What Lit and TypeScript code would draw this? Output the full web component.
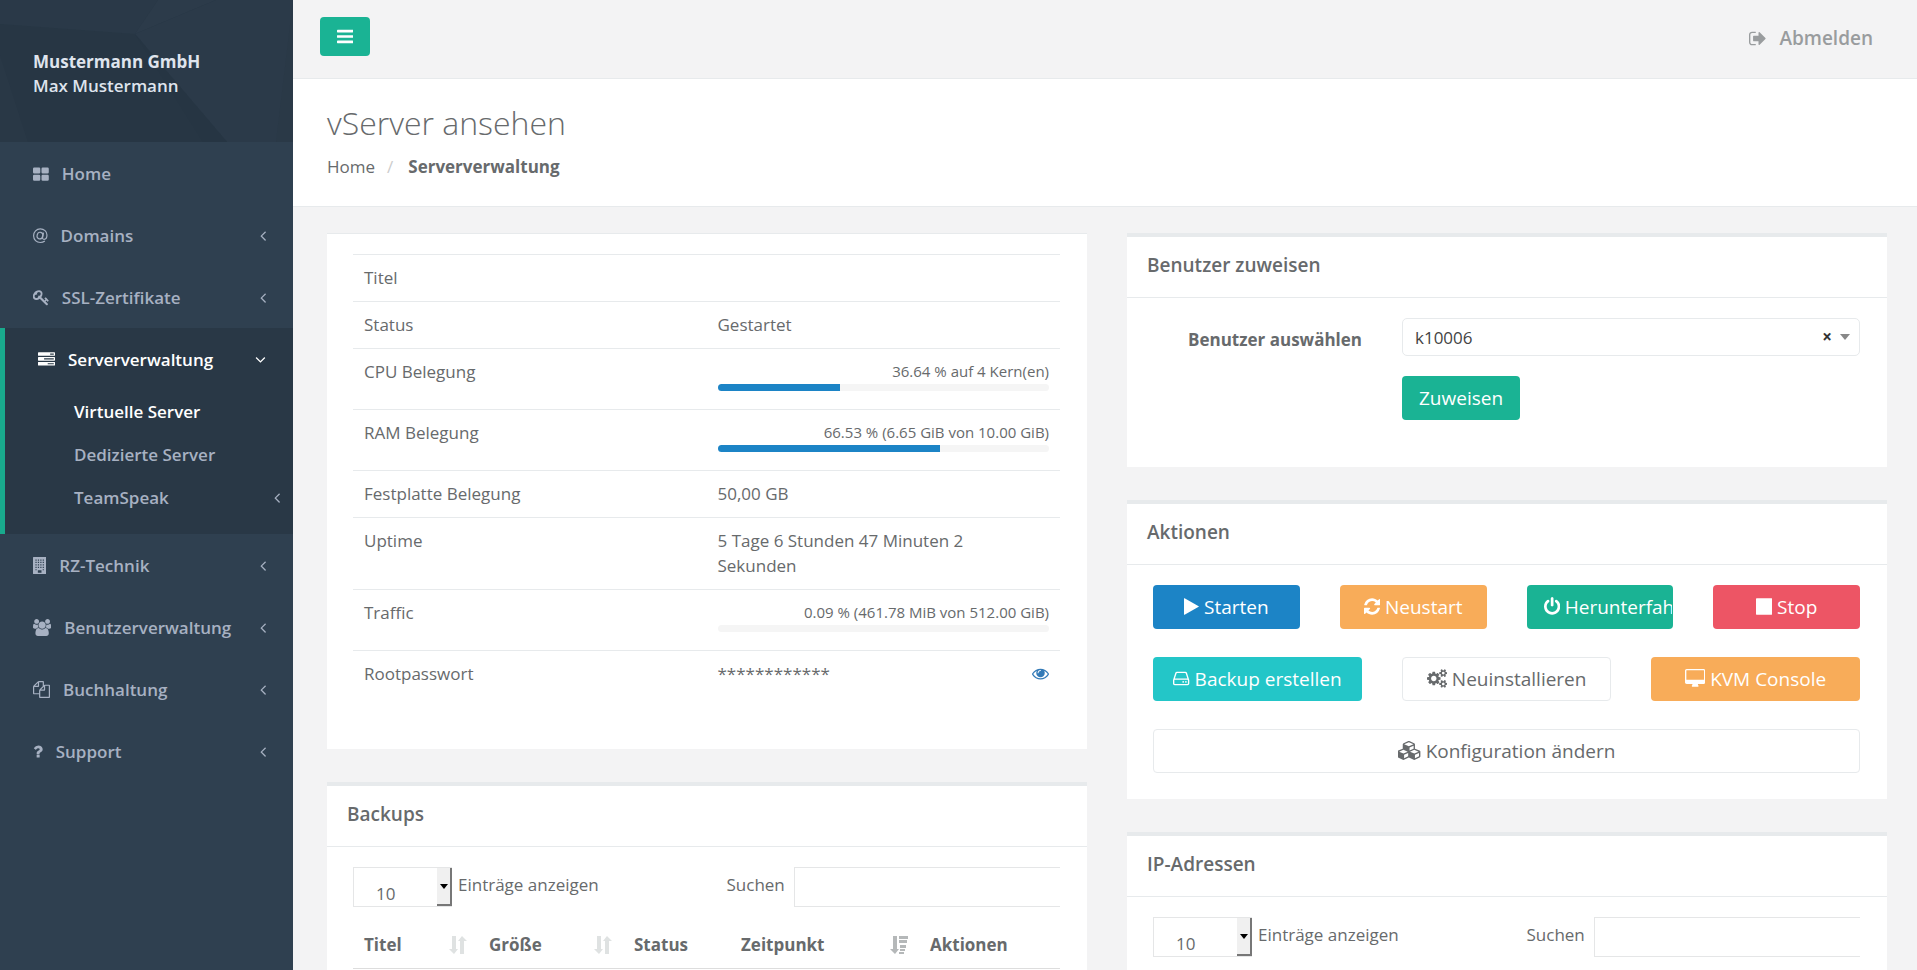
import { LitElement, html, css, svg, nothing } from "lit";
import { customElement, property, state } from "lit/decorators.js";
import { classMap } from "lit/directives/class-map.js";
import { styleMap } from "lit/directives/style-map.js";

/** Glyph outlines on a 1792-unit grid whose baseline lies at y = 1536: [min x, width, shape]. */
const GLYPHS: Record<string, [number, number, unknown]> = {
  bars: [128, 1536, svg`<path d="M1664 1344v128q0 26-19 45t-45 19h-1408q-26 0-45-19t-19-45v-128q0-26 19-45t45-19h1408q26 0 45 19t19 45zm0-512v128q0 26-19 45t-45 19h-1408q-26 0-45-19t-19-45v-128q0-26 19-45t45-19h1408q26 0 45 19t19 45zm0-512v128q0 26-19 45t-45 19h-1408q-26 0-45-19t-19-45v-128q0-26 19-45t45-19h1408q26 0 45 19t19 45z"/>`],
  grid: [0, 1664, svg`<path d="M128 256h512q128 0 128 128v384q0 128-128 128h-512q-128 0-128-128v-384q0-128 128-128zm896 0h512q128 0 128 128v384q0 128-128 128h-512q-128 0-128-128v-384q0-128 128-128zm-896 768h512q128 0 128 128v384q0 128-128 128h-512q-128 0-128-128v-384q0-128 128-128zm896 0h512q128 0 128 128v384q0 128-128 128h-512q-128 0-128-128v-384q0-128 128-128z"/>`],
  at: [0, 1536, svg`<g fill="none" stroke="currentColor" stroke-width="125"><path d="M1250 1480q-210 155-482 155c-400 0-705-310-705-715s305-715 705-715 705 270 705 640c0 290-160 450-310 450-130 0-170-80-150-190l95-520"/><ellipse cx="730" cy="905" rx="295" ry="350" transform="rotate(14 730 905)"/></g>`],
  key: [21, 1664, svg`<path d="M832 512q0-80-56-136t-136-56-136 56-56 136q0 42 19 83-41-19-83-19-80 0-136 56t-56 136 56 136 136 56 136-56 56-136q0-42-19-83 41 19 83 19 80 0 136-56t56-136zm851 704q0 17-49 66t-66 49q-9 0-28.500-16t-36.500-33-38.500-40-24.500-26l-96 96 220 220q28 28 28 68 0 42-39 81t-81 39q-40 0-68-28l-671-671q-176 131-365 131-163 0-265.500-102.500t-102.500-265.500q0-160 95-313t248-248 313-95q163 0 265.500 102.500t102.500 265.500q0 189-131 365l355 355 96-96q-3-3-26-24.500t-40-38.500-33-36.500-16-28.500q0-17 49-66t66-49q13 0 23 10 6 6 46 44.500t82 79.500 86.500 86 73 78 28.500 41z"/>`],
  tasks: [0, 1792, svg`<path d="M1024 1408h640v-128h-640v128zm-384-512h1024v-128h-1024v128zm640-512h384v-128h-384v128zm512 832v256q0 26-19 45t-45 19h-1664q-26 0-45-19t-19-45v-256q0-26 19-45t45-19h1664q26 0 45 19t19 45zm0-512v256q0 26-19 45t-45 19h-1664q-26 0-45-19t-19-45v-256q0-26 19-45t45-19h1664q26 0 45 19t19 45zm0-512v256q0 26-19 45t-45 19h-1664q-26 0-45-19t-19-45v-256q0-26 19-45t45-19h1664q26 0 45 19t19 45z"/>`],
  building: [0, 1408, svg`<path fill-rule="evenodd" d="M64 0h1280q64 0 64 64v1664q0 64-64 64h-1280q-64 0-64-64v-1664q0-64 64-64zM256 256v128h128v-128zM512 256v128h128v-128zM768 256v128h128v-128zM1024 256v128h128v-128zM256 512v128h128v-128zM512 512v128h128v-128zM768 512v128h128v-128zM1024 512v128h128v-128zM256 768v128h128v-128zM512 768v128h128v-128zM768 768v128h128v-128zM1024 768v128h128v-128zM256 1024v128h128v-128zM512 1024v128h128v-128zM768 1024v128h128v-128zM1024 1024v128h128v-128zM256 1280v128h128v-128zM1024 1280v128h128v-128zM512 1408v256h384v-256z"/>`],
  users: [0, 1920, svg`<path d="M593 896q-162 5-265 128h-134q-82 0-138-40.500t-56-118.500q0-353 124-353 6 0 43.500 21t97.500 42.500 119 21.500q67 0 133-23-5 37-5 66 0 139 81 256zm1071 637q0 120-73 189.500t-194 69.500h-874q-121 0-194-69.500t-73-189.500q0-53 3.500-103.500t14-109 26.500-108.500 43-97.500 62-81 85.500-53.500 111.500-20q10 0 43 21.500t73 48 107 48 135 21.500 135-21.500 107-48 73-48 43-21.500q61 0 111.500 20t85.500 53.500 62 81 43 97.500 26.500 108.500 14 109 3.500 103.500zm-1024-1277q0 106-75 181t-181 75-181-75-75-181 75-181 181-75 181 75 75 181zm704 384q0 159-112.500 271.500t-271.500 112.500-271.500-112.500-112.500-271.500 112.500-271.500 271.500-112.500 271.500 112.500 112.500 271.500zm576 225q0 78-56 118.500t-138 40.500h-134q-103-123-265-128 81-117 81-256 0-29-5-66 66 23 133 23 59 0 119-21.500t97.500-42.500 43.500-21q124 0 124 353zm-128-609q0 106-75 181t-181 75-181-75-75-181 75-181 181-75 181 75 75 181z"/>`],
  files: [0, 1792, svg`<path d="M1696 384q40 0 68 28t28 68v1216q0 40-28 68t-68 28h-960q-40 0-68-28t-28-68v-288h-544q-40 0-68-28t-28-68v-672q0-40 20-88t48-76l408-408q28-28 76-48t88-20h416q40 0 68 28t28 68v328q68-40 128-40h416zm-544 213l-299 299h299v-299zm-640-384l-299 299h299v-299zm196 647l316-316v-416h-384v416q0 40-28 68t-68 28h-416v640h512v-256q0-40 20-88t48-76zm956 804v-1152h-384v416q0 40-28 68t-68 28h-416v640h896z"/>`],
  question: [384, 1024, svg`<path d="M1088 1256v240q0 16-12 28t-28 12h-240q-16 0-28-12t-12-28v-240q0-16 12-28t28-12h240q16 0 28 12t12 28zm316-600q0 54-15.500 101t-35 76.500-55 59.500-57.500 43.500-61 35.500q-41 23-68.500 65t-27.500 67q0 17-12 32.500t-28 15.500h-240q-15 0-25.500-18.500t-10.500-37.500v-45q0-83 65-156.500t143-108.500q59-27 84-56t25-76q0-42-46.500-74t-107.500-32q-65 0-108 29-35 25-107 115-13 16-31 16-12 0-25-8l-164-125q-13-10-15.500-25t5.500-28q160-266 464-266 80 0 161 31t146 83 106 127.500 41 158.500z"/>`],
  left: [576, 640, svg`<path d="M1203 544q0 13-10 23l-393 393 393 393q10 10 10 23t-10 23l-50 50q-10 10-23 10t-23-10l-466-466q-10-10-10-23t10-23l466-466q10-10 23-10t23 10l50 50q10 10 10 23z"/>`],
  down: [320, 1152, svg`<path d="M1395 736q0 13-10 23l-466 466q-10 10-23 10t-23-10l-466-466q-10-10-10-23t10-23l50-50q10-10 23-10t23 10l393 393 393-393q10-10 23-10t23 10l50 50q10 10 10 23z"/>`],
  signout: [64, 1664, svg`<path d="M704 1440q0 4 1 20t.5 26.500-3 23.500-10 19.500-20.500 6.500h-320q-119 0-203.500-84.500t-84.500-203.500v-704q0-119 84.500-203.500t203.500-84.500h320q13 0 22.500 9.500t9.500 22.500q0 4 1 20t.5 26.500-3 23.500-10 19.500-20.500 6.500h-320q-66 0-113 47t-47 113v704q0 66 47 113t113 47h312l11.500 1 11.500 3 8 5.500 7 9 2 13.500zm928-544q0 26-19 45l-544 544q-19 19-45 19t-45-19-19-45v-288h-448q-26 0-45-19t-19-45v-384q0-26 19-45t45-19h448v-288q0-26 19-45t45-19 45 19l544 544q19 19 19 45z"/>`],
  play: [192, 1408, svg`<path d="M1576 927l-1328 738q-23 13-39.500 3t-16.500-36v-1472q0-26 16.500-36t39.500 3l1328 738q23 13 23 31t-23 31z"/>`],
  stop: [128, 1536, svg`<path d="M1664 192v1408q0 26-19 45t-45 19h-1408q-26 0-45-19t-19-45v-1408q0-26 19-45t45-19h1408q26 0 45 19t19 45z"/>`],
  refresh: [128, 1536, svg`<path d="M1639 1056q0 5-1 7-64 268-268 434.500t-478 166.500q-146 0-282.500-55t-243.500-157l-129 129q-19 19-45 19t-45-19-19-45v-448q0-26 19-45t45-19h448q26 0 45 19t19 45-19 45l-137 137q71 66 161 102t187 36q134 0 250-65t186-179q11-17 53-117 8-23 30-23h192q13 0 22.500 9.500t9.500 22.500zm25-800v448q0 26-19 45t-45 19h-448q-26 0-45-19t-19-45 19-45l138-138q-148-137-349-137-134 0-250 65t-186 179q-11 17-53 117-8 23-30 23h-199q-13 0-22.500-9.500t-9.500-22.500v-7q65-268 270-434.500t480-166.500q146 0 284 55.500t245 156.500l130-129q19-19 45-19t45 19 19 45z"/>`],
  power: [128, 1536, svg`<path d="M1664 896q0 156-61 298t-164 245-245 164-298 61-298-61-245-164-164-245-61-298q0-182 80.500-343t226.500-270q43-32 95.500-25t83.500 50q32 42 24.500 94.500t-49.500 84.500q-98 74-151.500 181t-53.500 228q0 104 40.500 198.500t109.500 163.500 163.500 109.500 198.500 40.500 198.500-40.500 163.500-109.500 109.500-163.500 40.500-198.500q0-121-53.500-228t-151.500-181q-42-32-49.500-84.500t24.500-94.500q31-43 84-50t95 25q146 109 226.500 270t80.500 343zm-640-768v640q0 52-38 90t-90 38-90-38-38-90v-640q0-52 38-90t90-38 90 38 38 90z"/>`],
  drive: [128, 1536, svg`<path d="M1168 1216q0 33-23.500 56.500t-56.500 23.500-56.500-23.500-23.500-56.500 23.500-56.500 56.500-23.500 56.500 23.500 23.500 56.500zm256 0q0 33-23.500 56.500t-56.500 23.500-56.500-23.500-23.500-56.500 23.500-56.500 56.500-23.500 56.500 23.500 23.500 56.500zm112 160v-320q0-13-9.500-22.500t-22.500-9.500h-1216q-13 0-22.500 9.500t-9.500 22.500v320q0 13 9.500 22.500t22.500 9.500h1216q13 0 22.500-9.500t9.500-22.500zm-1230-480h1180l-157-482q-4-13-16-21.500t-26-8.500h-782q-14 0-26 8.500t-16 21.500zm1358 160v320q0 66-47 113t-113 47h-1216q-66 0-113-47t-47-113v-320q0-25 16-75l197-606q17-53 63-86t101-33h782q55 0 101 33t63 86l197 606q16 50 16 75z"/>`],
  cogs: [-64, 1920, svg`<path d="M832 896q0-106-75-181t-181-75-181 75-75 181 75 181 181 75 181-75 75-181zm768 512q0-52-38-90t-90-38-90 38-38 90q0 53 37.500 90.500t90.500 37.500 90.500-37.500 37.500-90.500zm0-1024q0-52-38-90t-90-38-90 38-38 90q0 53 37.500 90.500t90.500 37.500 90.500-37.500 37.500-90.500zm-384 421v185q0 10-7 19.500t-16 10.500l-155 24q-11 35-32 76 34 48 90 115 7 11 7 20 0 12-7 19-23 30-82.500 89.500t-78.500 59.500q-11 0-21-7l-115-90q-37 19-77 31-11 108-23 155-7 24-30 24h-186q-11 0-20-7.500t-10-17.500l-23-153q-34-10-75-31l-118 89q-7 7-20 7-11 0-21-8-144-133-144-160 0-9 7-19 10-14 41-53t47-61q-23-44-35-82l-152-24q-10-1-17-9.500t-7-19.500v-185q0-10 7-19.500t16-10.500l155-24q11-35 32-76-34-48-90-115-7-11-7-20 0-12 7-20 22-30 82-89t79-59q11 0 21 7l115 90q34-18 77-32 11-108 23-154 7-24 30-24h186q11 0 20 7.500t10 17.500l23 153q34 10 75 31l118-89q8-7 20-7 11 0 21 8 144 133 144 160 0 8-7 19-12 16-42 54t-45 60q23 48 34 82l152 23q10 2 17 10.500t7 19.500zm640 533v140q0 16-149 31-12 27-30 52 51 113 51 138 0 4-4 7-122 71-124 71-8 0-46-47t-52-68q-20 2-30 2t-30-2q-14 21-52 68t-46 47q-2 0-124-71-4-3-4-7 0-25 51-138-18-25-30-52-149-15-149-31v-140q0-16 149-31 13-29 30-52-51-113-51-138 0-4 4-7 4-2 35-20t59-34 30-16q8 0 46 46.500t52 67.500q20-2 30-2t30 2q51-71 92-112l6-2q4 0 124 70 4 3 4 7 0 25-51 138 17 23 30 52 149 15 149 31zm0-1024v140q0 16-149 31-12 27-30 52 51 113 51 138 0 4-4 7-122 71-124 71-8 0-46-47t-52-68q-20 2-30 2t-30-2q-14 21-52 68t-46 47q-2 0-124-71-4-3-4-7 0-25 51-138-18-25-30-52-149-15-149-31v-140q0-16 149-31 13-29 30-52-51-113-51-138 0-4 4-7 4-2 35-20t59-34 30-16q8 0 46 46.500t52 67.500q20-2 30-2t30 2q51-71 92-112l6-2q4 0 124 70 4 3 4 7 0 25-51 138 17 23 30 52 149 15 149 31z"/>`],
  desktop: [-64, 1920, svg`<path d="M1728 992v-832q0-13-9.500-22.500t-22.500-9.500h-1600q-13 0-22.500 9.500t-9.500 22.500v832q0 13 9.500 22.500t22.500 9.500h1600q13 0 22.500-9.500t9.500-22.500zm128-832v1088q0 66-47 113t-113 47h-544q0 37 16 77.500t32 71 16 43.500q0 26-19 45t-45 19h-512q-26 0-45-19t-19-45q0-14 16-44t32-70 16-78h-544q-66 0-113-47t-47-113v-1088q0-66 47-113t113-47h1600q66 0 113 47t47 113z"/>`],
  cubes: [0, 2176, svg`<path fill-rule="evenodd" d="M576 1632l384-192v-314l-384 164v342zm-64-454l404-173-404-173-404 173zm1088 454l384-192v-314l-384 164v342zm-64-454l404-173-404-173-404 173zm-448-293l384-165v-266l-384 164v267zm-64-379l441-189-441-189-441 189zm1088 518v416q0 36-19 67t-52 47l-448 224q-25 14-57 14t-57-14l-448-224q-4-2-7-4-2 2-7 4l-448 224q-25 14-57 14t-57-14l-448-224q-33-16-52-47t-19-67v-416q0-38 21.500-70t56.500-48l434-186v-400q0-38 21.500-70t56.500-48l448-192q23-10 50-10t50 10l448 192q35 16 56.500 48t21.500 70v400l434 186q36 16 57 48t21 70z"/>`],
  eye: [0, 1792, svg`<path d="M1664 960q-152-236-381-353 61 104 61 225 0 185-131.500 316.500t-316.500 131.500-316.500-131.500-131.500-316.500q0-121 61-225-229 117-381 353 133 205 333.500 326.500t434.500 121.500 434.500-121.500 333.500-326.500zm-720-384q0-20-14-34t-34-14q-125 0-214.500 89.500t-89.500 214.500q0 20 14 34t34 14 34-14 14-34q0-86 61-147t147-61q20 0 34-14t14-34zm848 384q0 34-20 69-140 230-376.500 368.500t-499.500 138.500-499.500-139-376.500-368q-20-35-20-69t20-69q140-229 376.500-368t499.500-139 499.500 139 376.500 368q20 35 20 69z"/>`],
};

const icon = (name: string) => {
  const [x, width, shape] = GLYPHS[name];
  return html`<svg class="icon" aria-hidden="true" viewBox="${x} 0 ${width} 1792" style=${styleMap({ width: `${width / 1792}em` })}>${shape}</svg>`;
};

const sortBoth = html`<svg class="sort" aria-hidden="true" width="18" height="18" viewBox="0 0 18 18" fill="#dfe2e2"><path d="M3 0h4v13h2l-4 5-5-5h3zM11 18h4v-13h3l-5-5-4 5h2z"/></svg>`;
const sortDesc = html`<svg class="sort" aria-hidden="true" width="18" height="18" viewBox="0 0 18 18" fill="#b5b8b9"><path d="M3 0h4v13h2l-4 5-5-5h3zM9 0h9v3h-9zM9 4h8v3h-8zM10 9h6v3h-6zM10 13h5v2h-5zM9 16h5v2h-5z"/></svg>`;

interface NavItem {
  label: string;
  icon: string;
  arrow?: boolean;
  children?: { label: string; current?: boolean; arrow?: boolean }[];
}

const NAV: NavItem[] = [
  { label: "Home", icon: "grid" },
  { label: "Domains", icon: "at", arrow: true },
  { label: "SSL-Zertifikate", icon: "key", arrow: true },
  {
    label: "Serververwaltung",
    icon: "tasks",
    arrow: true,
    children: [
      { label: "Virtuelle Server", current: true },
      { label: "Dedizierte Server" },
      { label: "TeamSpeak", arrow: true },
    ],
  },
  { label: "RZ-Technik", icon: "building", arrow: true },
  { label: "Benutzerverwaltung", icon: "users", arrow: true },
  { label: "Buchhaltung", icon: "files", arrow: true },
  { label: "Support", icon: "question", arrow: true },
];

const base = css`
  * {
    box-sizing: border-box;
  }
  a {
    color: inherit;
    text-decoration: none;
  }
  button,
  input,
  select {
    font: inherit;
    color: inherit;
    margin: 0;
  }
  .icon {
    display: inline-block;
    height: 1em;
    vertical-align: -0.143em;
    fill: currentColor;
  }
`;

@customElement("side-nav")
export class SideNav extends LitElement {
  static styles = [
    base,
    css`
      :host {
        display: block;
        background: #2f4050;
        color: #a7b1c2;
        font-weight: 600;
      }
      .profile {
        display: grid;
        height: 142px;
        background: #273644;
        color: #dfe4ed;
        line-height: 24px;
      }
      .profile > * {
        grid-area: 1 / 1;
      }
      .facets {
        width: 100%;
        height: 142px;
      }
      .who {
        padding: 50px 33px 0;
      }
      .who strong {
        display: block;
        font-weight: 700;
      }
      ul {
        list-style: none;
        margin: 0;
        padding: 0;
      }
      .item {
        display: flex;
        align-items: center;
        height: 62px;
        padding: 0 27px 0 33px;
      }
      .label {
        flex: 1;
        margin-left: 13px;
      }
      .open {
        background: #293846;
        border-left: 5px solid #19aa8d;
        padding-bottom: 15px;
      }
      .open > .item,
      .current {
        color: #fff;
      }
      .sub {
        display: flex;
        align-items: center;
        justify-content: space-between;
        height: 43px;
        padding: 0 13px 0 69px;
      }
    `,
  ];

  render() {
    return html`
      <div class="profile">
        <svg class="facets" viewBox="0 0 293 142" preserveAspectRatio="none" aria-hidden="true">
          <path fill="#2a3948" d="M0 0h158l-23 34-135-10z" />
          <path fill="#2c3b4a" d="M158 0h58l-81 34z" />
          <path fill="#2b3a49" d="M216 0h77v142h-66l-92-108z" />
          <path fill="#2a3947" d="M293 0v142h-17z" />
          <path fill="#293846" d="M0 55l28 87h-28z" />
          <path fill="#263543" d="M135 34l92 108h-24z" />
        </svg>
        <div class="who"><strong>Mustermann GmbH</strong><span>Max Mustermann</span></div>
      </div>
      <nav>
        <ul>
          ${NAV.map(
            (n) => html`<li class=${classMap({ open: !!n.children })}>
              <a class="item" href="#">
                ${icon(n.icon)}<span class="label">${n.label}</span>
                ${n.arrow ? icon(n.children ? "down" : "left") : nothing}
              </a>
              ${n.children
                ? html`<ul>
                    ${n.children.map(
                      (c) => html`<li>
                        <a class=${classMap({ sub: true, current: !!c.current })} href="#"
                          ><span>${c.label}</span>${c.arrow ? icon("left") : nothing}</a
                        >
                      </li>`,
                    )}
                  </ul>`
                : nothing}
            </li>`,
          )}
        </ul>
      </nav>
    `;
  }
}

@customElement("panel-card")
export class PanelCard extends LitElement {
  @property() heading = "";

  static styles = [
    base,
    css`
      :host {
        display: block;
        background: #fff;
        border-top: 4px solid #e7eaec;
      }
      :host(:not([heading])) {
        border-top-width: 1px;
      }
      h2 {
        margin: 0;
        padding: 16px 20px 19px;
        font-size: 19px;
        line-height: 25px;
        font-weight: 600;
        border-bottom: 1px solid #e7eaec;
      }
      .body {
        padding: 20px 27px 26px 26px;
      }
    `,
  ];

  render() {
    return html`
      ${this.heading ? html`<h2>${this.heading}</h2>` : nothing}
      <div class="body"><slot></slot></div>
    `;
  }
}

@customElement("table-tools")
export class TableTools extends LitElement {
  static styles = [
    base,
    css`
      :host {
        display: grid;
        grid-template-columns: repeat(2, minmax(0, 1fr));
        overflow: hidden;
      }
      label {
        display: flex;
        line-height: 36px;
        white-space: nowrap;
      }
      .length {
        gap: 6px;
      }
      .search {
        gap: 9px;
        padding-left: 20px;
      }
      .pick {
        position: relative;
        display: block;
        width: 99px;
      }
      select {
        appearance: none;
        display: block;
        width: 100%;
        height: 40px;
        padding: 8px 20px 0 22px;
        border: 1px solid #e5e6e7;
        border-radius: 0;
        background: #fff;
      }
      .drop {
        position: absolute;
        top: 1px;
        right: 0;
        bottom: 1px;
        width: 15px;
        display: grid;
        place-items: center;
        background: #f0f0f0;
        border-right: 2px solid #777;
        border-bottom: 2px solid #777;
        pointer-events: none;
      }
      .drop::before {
        content: "";
        border: 4px solid transparent;
        border-top: 5px solid #000;
        border-bottom: 0;
      }
      input {
        flex: none;
        width: 300px;
        height: 40px;
        padding: 0 12px;
        border: 1px solid #e5e6e7;
        background: #fff;
      }
    `,
  ];

  render() {
    return html`
      <label class="length">
        <span class="pick">
          <select>
            <option>10</option>
            <option>25</option>
            <option>50</option>
          </select>
          <span class="drop"></span>
        </span>
        <span>Einträge anzeigen</span>
      </label>
      <label class="search"><span>Suchen</span><input type="search" /></label>
    `;
  }
}

@customElement("app-root")
export class AppRoot extends LitElement {
  @state() private revealed = false;

  static styles = [
    base,
    css`
      :host {
        display: grid;
        grid-template-columns: 293px minmax(0, 1fr);
        height: 100vh;
        background: #f3f3f4;
        color: #676a6c;
        font-family: "Open Sans", "Noto Sans", sans-serif;
        font-size: 17px;
        line-height: 25px;
      }
      .page {
        overflow-y: auto;
        scrollbar-width: none;
      }
      .topbar {
        display: flex;
        justify-content: space-between;
        height: 79px;
        padding: 17px 44px 0 27px;
        border-bottom: 1px solid #e7eaec;
        font-size: 19px;
      }
      .toggle {
        width: 50px;
        height: 39px;
        padding: 0;
        border: 0;
        border-radius: 4px;
        background: #1ab394;
        color: #fff;
      }
      .logout {
        height: 42px;
        display: flex;
        align-items: center;
        gap: 13px;
        color: #999c9e;
        font-weight: 600;
      }
      .heading {
        padding: 22px 34px 27px;
        background: #fff;
        border-bottom: 1px solid #e7eaec;
      }
      h1 {
        margin: 0 0 9px;
        font-size: 32px;
        line-height: 44px;
        font-weight: 300;
      }
      .crumbs {
        display: flex;
        list-style: none;
        margin: 0;
        padding: 0;
      }
      .crumbs li + li::before {
        content: "/";
        padding: 0 15px 0 12px;
        font-weight: 400;
        color: #ccc;
      }
      .crumbs strong {
        font-weight: 700;
      }
      .columns {
        display: grid;
        grid-template-columns: repeat(2, minmax(0, 1fr));
        align-items: start;
        gap: 40px;
        padding: 26px 30px 40px 34px;
      }
      .column {
        display: grid;
        gap: 33px;
      }
      table {
        width: 100%;
        border-collapse: collapse;
      }
      .facts {
        table-layout: fixed;
        margin-bottom: 26px;
      }
      .facts th,
      .facts td {
        width: 50%;
        padding: 10px 11px 11px;
        border-top: 1px solid #e7eaec;
        text-align: left;
        font-weight: 400;
        vertical-align: top;
      }
      .amount {
        display: block;
        text-align: right;
        font-size: 15px;
      }
      .track {
        height: 7px;
        margin-bottom: 7px;
        border-radius: 4px;
        overflow: hidden;
        background: #f5f5f5;
      }
      .fill {
        height: 100%;
        background: #1c84c6;
      }
      .secret {
        display: flex;
        justify-content: space-between;
      }
      .reveal {
        padding: 0;
        border: 0;
        background: none;
        color: #337ab7;
      }
      .records {
        margin-top: 14px;
        table-layout: fixed;
      }
      .records th {
        padding: 11px;
        border-bottom: 1px solid #ddd;
        text-align: left;
        font-weight: 700;
      }
      .sorted > span {
        display: flex;
        justify-content: space-between;
        align-items: center;
      }
      .c1 {
        width: 125px;
      }
      .c2 {
        width: 145px;
      }
      .c3 {
        width: 107px;
      }
      .c4 {
        width: 189px;
      }
      .assign {
        display: grid;
        grid-template-columns: 209px minmax(0, 1fr);
        gap: 20px 40px;
        margin-bottom: 21px;
      }
      .assign label {
        padding-top: 9px;
        text-align: right;
        font-weight: 700;
      }
      .assign .btn {
        grid-column: 2;
        justify-self: start;
      }
      .user {
        position: relative;
      }
      .user select {
        appearance: none;
        display: block;
        width: 100%;
        height: 38px;
        padding: 0 50px 0 12px;
        border: 1px solid #e7eaec;
        border-radius: 5px;
        background: #fff;
        color: #444;
      }
      .extras {
        position: absolute;
        inset: 0 10px 0 auto;
        display: flex;
        align-items: center;
        gap: 8px;
        pointer-events: none;
      }
      .extras::after {
        content: "";
        border: 5px solid transparent;
        border-top: 6px solid #888;
        border-bottom: 0;
      }
      .clear {
        padding: 0;
        border: 0;
        background: none;
        color: #333;
        font-weight: 700;
        line-height: 20px;
        pointer-events: auto;
      }
      .actions {
        display: grid;
        grid-template-columns: repeat(12, minmax(0, 1fr));
        gap: 28px 0;
        margin: 0 -20px;
      }
      .actions > * {
        margin: 0 20px;
      }
      .quarter {
        grid-column: span 3;
      }
      .third {
        grid-column: span 4;
      }
      .full {
        grid-column: 1 / -1;
      }
      .btn {
        height: 44px;
        padding: 0 16px;
        border: 1px solid transparent;
        border-radius: 4px;
        font-size: 19px;
        text-align: center;
        white-space: nowrap;
        overflow: hidden;
        color: #fff;
      }
      .primary {
        background: #1ab394;
      }
      .success {
        background: #1c84c6;
      }
      .warning {
        background: #f8ac59;
      }
      .danger {
        background: #ed5565;
      }
      .info {
        background: #23c6c8;
      }
      .plain {
        background: #fff;
        border-color: #e7eaec;
        color: inherit;
      }
    `,
  ];

  private usage(percent: number, text: string) {
    return html`<span class="amount">${text}</span>
      <div class="track"><div class="fill" style=${styleMap({ width: `${percent}%` })}></div></div>`;
  }

  private fact(label: string, value: unknown) {
    return html`<tr>
      <th scope="row">${label}</th>
      <td>${value}</td>
    </tr>`;
  }

  private action(kind: string, size: string, glyph: string, label: string) {
    return html`<button type="button" class="btn ${kind} ${size}">${icon(glyph)} ${label}</button>`;
  }

  render() {
    return html`
      <side-nav></side-nav>
      <div class="page">
        <header class="topbar">
          <button type="button" class="toggle" aria-label="Menü">${icon("bars")}</button>
          <a class="logout" href="#">${icon("signout")}<span>Abmelden</span></a>
        </header>
        <div class="heading">
          <h1>vServer ansehen</h1>
          <ol class="crumbs">
            <li><a href="#">Home</a></li>
            <li><strong>Serververwaltung</strong></li>
          </ol>
        </div>
        <main class="columns">
          <div class="column">
            <panel-card>
              <table class="facts">
                <tbody>
                  ${this.fact("Titel", "")} ${this.fact("Status", "Gestartet")}
                  ${this.fact("CPU Belegung", this.usage(37, "36.64 % auf 4 Kern(en)"))}
                  ${this.fact("RAM Belegung", this.usage(67, "66.53 % (6.65 GiB von 10.00 GiB)"))}
                  ${this.fact("Festplatte Belegung", "50,00 GB")}
                  ${this.fact("Uptime", html`5 Tage 6 Stunden 47 Minuten 2<br />Sekunden`)}
                  ${this.fact("Traffic", this.usage(0, "0.09 % (461.78 MiB von 512.00 GiB)"))}
                  ${this.fact(
                    "Rootpasswort",
                    html`<div class="secret">
                      <span>************</span>
                      <button
                        type="button"
                        class="reveal"
                        aria-label="Anzeigen"
                        aria-pressed=${this.revealed ? "true" : "false"}
                        @click=${() => (this.revealed = !this.revealed)}
                      >
                        ${icon("eye")}
                      </button>
                    </div>`,
                  )}
                </tbody>
              </table>
            </panel-card>
            <panel-card heading="Backups">
              <table-tools></table-tools>
              <table class="records">
                <thead>
                  <tr>
                    <th class="c1 sorted"><span>Titel ${sortBoth}</span></th>
                    <th class="c2 sorted"><span>Größe ${sortBoth}</span></th>
                    <th class="c3">Status</th>
                    <th class="c4 sorted"><span>Zeitpunkt ${sortDesc}</span></th>
                    <th>Aktionen</th>
                  </tr>
                </thead>
              </table>
            </panel-card>
          </div>
          <div class="column">
            <panel-card heading="Benutzer zuweisen">
              <form class="assign" @submit=${(e: Event) => e.preventDefault()}>
                <label for="user">Benutzer auswählen</label>
                <div class="user">
                  <select id="user">
                    <option>k10006</option>
                  </select>
                  <span class="extras"><button type="button" class="clear" aria-label="Leeren">×</button></span>
                </div>
                <button class="btn primary">Zuweisen</button>
              </form>
            </panel-card>
            <panel-card heading="Aktionen">
              <div class="actions">
                ${this.action("success", "quarter", "play", "Starten")}
                ${this.action("warning", "quarter", "refresh", "Neustart")}
                ${this.action("primary", "quarter", "power", "Herunterfahren")}
                ${this.action("danger", "quarter", "stop", "Stop")}
                ${this.action("info", "third", "drive", "Backup erstellen")}
                ${this.action("plain", "third", "cogs", "Neuinstallieren")}
                ${this.action("warning", "third", "desktop", "KVM Console")}
                ${this.action("plain", "full", "cubes", "Konfiguration ändern")}
              </div>
            </panel-card>
            <panel-card heading="IP-Adressen">
              <table-tools></table-tools>
            </panel-card>
          </div>
        </main>
      </div>
    `;
  }
}
